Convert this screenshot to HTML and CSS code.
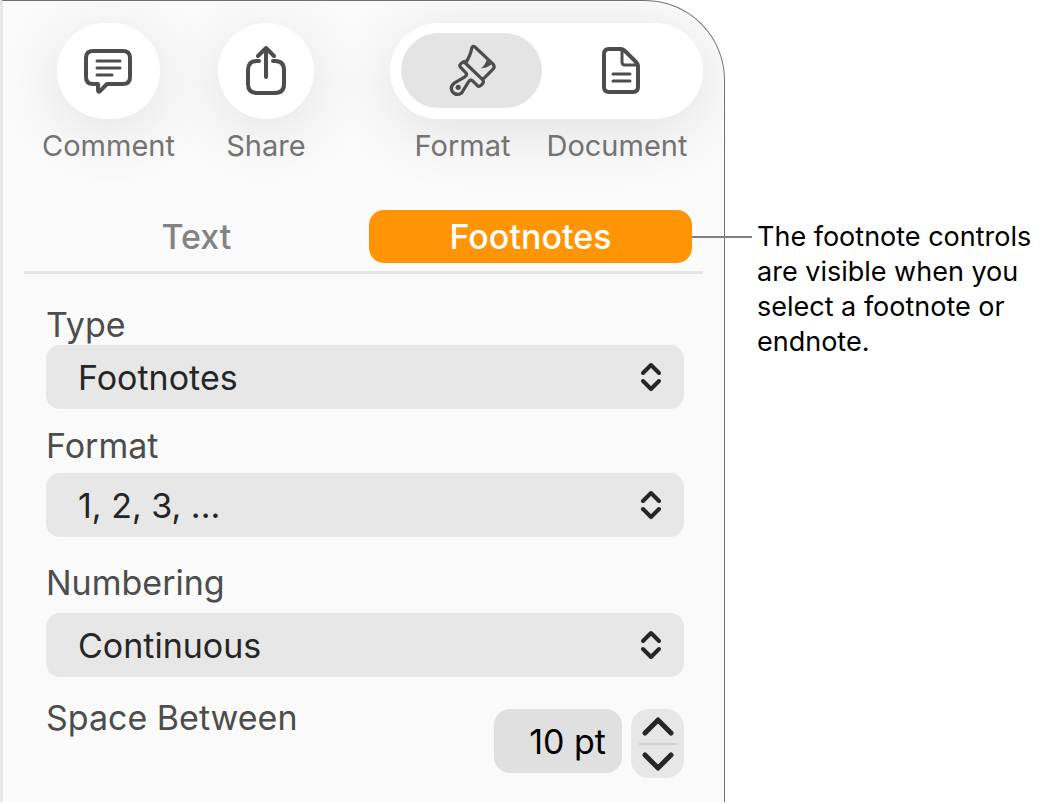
FILE: index.html
```html
<!DOCTYPE html>
<html lang="en">
<head>
  <meta charset="UTF-8">
  <meta name="viewport" content="width=device-width, initial-scale=1.0">
  <title>Footnotes</title>
  <link rel="stylesheet" href="styles.css">
</head>
<body>
  <main class="page">
    <section class="panel">
      <header class="toolbar">
        <div class="tool">
          <button class="round wide" type="button" aria-labelledby="comment-label">
            <svg width="52" height="50" viewBox="0 -1 52 50">
              <path class="thick" d="M11 4H41Q48 4 48 11V30Q48 37 41 37H25L18 44Q16 46 16 43V37H11Q4 37 4 30V11Q4 4 11 4Z"/>
              <path class="thin" d="M15 14H38M15 21H38M15 28H30"/>
            </svg>
          </button>
          <span class="caption" id="comment-label">Comment</span>
        </div>
        <div class="tool">
          <button class="round" type="button" aria-labelledby="share-label">
            <svg width="42" height="52" viewBox="0 1 42 52">
              <path class="thick" d="M14 17H12Q3 17 3 26V40Q3 49 12 49H30Q39 49 39 40V26Q39 17 30 17H28M21 4V33M13 12L21 4L29 12"/>
            </svg>
          </button>
          <span class="caption" id="share-label">Share</span>
        </div>
        <div class="tool inspector">
          <div class="segments">
            <button class="segment active" type="button" aria-labelledby="format-label">
              <svg width="52" height="54" viewBox="192 129 162 168">
                <path class="brush" d="M256 184Q270 158 272 142Q275 132 283 139L338 191Q346 200 338 208L306 240M256 184Q249 181 241 188Q231 195 237 201L255 220Q258 226 251 231L220 249Q203 260 211 276Q224 293 241 281L262 247Q267 237 275 244L289 258Q296 264 303 256Q312 248 306 240L252 188"/>
                <path class="notch" d="M300 205Q314 195 319 178L333 193Q317 205 300 205Z"/>
                <circle cx="230" cy="264" r="8"/>
              </svg>
            </button>
            <button class="segment" type="button" aria-labelledby="document-label">
              <svg width="42" height="52" viewBox="0 1 42 52">
                <path class="thick" d="M9 5H21Q23 5 25 7L36 18Q38 20 38 22V43Q38 48 33 48H9Q4 48 4 43V10Q4 5 9 5Z"/>
                <path class="fold" d="M22 5V18Q22 21 25 21H38"/>
                <path class="thin" d="M13 30H30M13 37H30"/>
              </svg>
            </button>
          </div>
          <div class="captions">
            <span class="caption" id="format-label">Format</span>
            <span class="caption" id="document-label">Document</span>
          </div>
        </div>
      </header>

      <nav class="tabs">
        <button class="tab" type="button">Text</button>
        <button class="tab selected" type="button">Footnotes</button>
      </nav>

      <form class="controls">
        <div class="field">
          <label for="type">Type</label>
          <div class="popup">
            <select id="type"><option>Footnotes</option></select>
            <svg width="22" height="30" viewBox="0 0 22 30"><path d="M3 11L11 3L19 11M3 19L11 27L19 19"/></svg>
          </div>
        </div>
        <div class="field format">
          <label for="format">Format</label>
          <div class="popup">
            <select id="format"><option>1, 2, 3, ...</option></select>
            <svg width="22" height="30" viewBox="0 0 22 30"><path d="M3 11L11 3L19 11M3 19L11 27L19 19"/></svg>
          </div>
        </div>
        <div class="field numbering">
          <label for="numbering">Numbering</label>
          <div class="popup">
            <select id="numbering"><option>Continuous</option></select>
            <svg width="22" height="30" viewBox="0 0 22 30"><path d="M3 11L11 3L19 11M3 19L11 27L19 19"/></svg>
          </div>
        </div>
        <div class="space">
          <label for="space">Space Between</label>
          <input id="space" type="text" value="10 pt">
          <div class="stepper">
            <button type="button" aria-label="Increase">
              <svg width="34" height="20" viewBox="0 0 34 20"><path d="M4 17L17 4L30 17"/></svg>
            </button>
            <button type="button" aria-label="Decrease">
              <svg width="34" height="20" viewBox="0 0 34 20"><path d="M4 3L17 16L30 3"/></svg>
            </button>
          </div>
        </div>
      </form>
    </section>

    <aside class="note">The footnote controls are visible when you select a footnote or endnote.</aside>
  </main>
</body>
</html>
```
FILE: styles.css
```css
* {
  box-sizing: border-box;
}

body {
  margin: 0;
  background: #fff;
  font-family: Inter, "Liberation Sans", sans-serif;
}

button,
input,
select {
  font-family: inherit;
  border: none;
  padding: 0;
  margin: 0;
}

svg {
  display: block;
  fill: none;
  stroke-linecap: round;
  stroke-linejoin: round;
}

.page {
  display: flex;
  align-items: flex-start;
}

.panel {
  flex: 1;
  min-width: 0;
  padding-bottom: 24px;
  background: #fafafa;
  border: 1px solid #6e6e6e;
  border-left: 3px solid #e6e6e6;
  border-bottom: none;
  border-top-right-radius: 80px;
  box-shadow: inset 0 0 0 1px #fff;
}

/* toolbar, clips the button shadows at the window corner */
.toolbar {
  display: flex;
  padding: 22px 21px 47px 39px;
  overflow: hidden;
  border-top-right-radius: 79px;
}

.tool {
  display: flex;
  flex-direction: column;
  align-items: center;
}

.tool + .tool {
  margin-left: 43px;
}

.toolbar .inspector {
  margin-left: auto;
}

.round {
  width: 96px;
  height: 96px;
  display: flex;
  align-items: center;
  justify-content: center;
  background: #fff;
  border-radius: 48px;
  box-shadow: 0 12px 64px rgba(0, 0, 0, 0.1);
}

.wide {
  width: 103px;
}

.segments {
  display: flex;
  width: 313px;
  height: 96px;
  padding: 10px 3px 11px 11px;
  background: #fff;
  border-radius: 48px;
  box-shadow: 0 12px 64px rgba(0, 0, 0, 0.1);
}

.segment {
  display: flex;
  align-items: center;
  justify-content: center;
  flex: 1;
  background: none;
  border-radius: 38px;
}

.segment.active {
  flex: 0 0 141px;
  background: #e4e4e4;
}

.thick,
.thin,
.fold,
.brush {
  stroke: #4d4d4d;
}

.thick {
  stroke-width: 4;
}

.thin,
.fold {
  stroke-width: 3;
}

.brush {
  stroke-width: 10;
}

.notch,
.segment circle {
  fill: #4d4d4d;
}

.caption {
  position: relative;
  margin-top: 10px;
  font-size: 29px;
  line-height: 34px;
  color: #737373;
}

.captions {
  display: flex;
  gap: 36px;
  padding-left: 9px;
}

/* tabs */
.tabs {
  display: grid;
  grid-template-columns: 1fr 1fr;
  gap: 11px;
  margin: 0 21px;
  padding: 0 11px 8px;
  border-bottom: 3px solid #e5e5e5;
}

.tab {
  position: relative;
  height: 53px;
  background: none;
  border-radius: 15px;
  font-size: 34px;
  font-weight: 500;
  color: #838383;
}

.tab.selected {
  background: #ff9505;
  color: #fff;
}

/* leader line to the note */
.tab.selected::after {
  content: "";
  position: absolute;
  top: 26px;
  left: 100%;
  width: 60px;
  height: 2px;
  background: #808080;
}

/* controls */
.controls {
  padding: 31px 40px 0 43px;
}

.controls label {
  display: block;
  font-size: 34px;
  line-height: 40px;
  color: #4d4d4d;
}

.format {
  margin-top: 17px;
}

.format .popup {
  margin-top: 7px;
}

.numbering {
  margin-top: 26px;
}

.numbering .popup {
  margin-top: 10px;
}

.popup {
  position: relative;
}

.popup select {
  display: block;
  appearance: none;
  width: 100%;
  height: 64px;
  padding: 0 32px;
  background: #e7e7e7;
  border-radius: 14px;
  font-size: 34px;
  color: #262626;
}

.popup svg {
  position: absolute;
  top: 17px;
  right: 22px;
  stroke: #262626;
  stroke-width: 4;
  pointer-events: none;
}

.space {
  display: flex;
  align-items: flex-start;
  margin-top: 32px;
}

.controls .space label {
  margin-top: -11px;
}

.space input {
  width: 128px;
  height: 64px;
  margin-left: auto;
  padding-right: 16px;
  background: #e0e0e0;
  border-radius: 16px;
  font-size: 34px;
  text-align: right;
  color: #000;
}

.stepper {
  width: 53px;
  margin-left: 9px;
  padding: 0 8px;
  background: #e7e7e7;
  border-radius: 18px;
}

.stepper button {
  display: flex;
  align-items: center;
  justify-content: center;
  width: 100%;
  height: 34px;
  background: none;
}

.stepper button + button {
  height: 35px;
  border-top: 2px solid #d0d0d0;
}

.stepper svg {
  stroke: #262626;
  stroke-width: 5;
}

/* note */
.note {
  width: 322px;
  padding: 219px 0 0 32px;
  font-size: 27px;
  line-height: 35px;
  color: #000;
}
```
